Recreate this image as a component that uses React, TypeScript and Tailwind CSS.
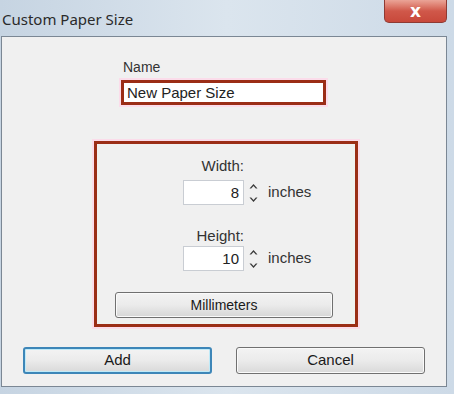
function Spin({ value }: { value: string }) {
  return (
    <div className="flex items-center">
      <div className="w-[61px] h-[25px] border border-[#c9cdd3] bg-white text-right pr-[4px] text-[15px] leading-[23px] text-[#222]">
        {value}
      </div>
      <div className="ml-[4px] w-[11px] h-[20px] flex flex-col items-center justify-between text-[#333]">
        <svg width="9" height="6" viewBox="0 0 9 6">
          <path d="M0.5 5.5 L4.5 1 L8.5 5.5 L6.8 5.5 L4.5 3 L2.2 5.5 Z" fill="#3a3a3a" />
        </svg>
        <svg width="9" height="6" viewBox="0 0 9 6">
          <path d="M0.5 0.5 L4.5 5 L8.5 0.5 L6.8 0.5 L4.5 3 L2.2 0.5 Z" fill="#3a3a3a" />
        </svg>
      </div>
      <span className="ml-[9px] text-[15px] text-[#333]">inches</span>
    </div>
  );
}

function Btn({ label, focused }: { label: string; focused?: boolean }) {
  return (
    <div
      className={
        "w-[189px] h-[27px] rounded-[3px] flex items-center justify-center text-[15px] text-[#1a1a1a] bg-gradient-to-b from-[#f3f3f3] via-[#ebebeb] to-[#d9d9d9] " +
        (focused
          ? "border-2 border-[#3d86b8] shadow-[inset_0_0_0_1px_#bfeaf8]"
          : "border border-[#707070] shadow-[inset_0_0_0_1px_#fafafa]")
      }
    >
      {label}
    </div>
  );
}

export default function App() {
  return (
    <div
      className="w-[454px] h-[394px] overflow-hidden bg-gradient-to-r from-[#c6d4e2] via-[#dbe5ee] to-[#cddae7] flex flex-col"
      style={{ fontFamily: '"Liberation Sans", Arial, sans-serif' }}
    >
      {/* title bar */}
      <div className="h-[36px] shrink-0 flex items-start">
        <div
          className="ml-[2px] mt-[8px] text-[15px] leading-[22px] text-[#2a2a2a]"
          style={{ fontFamily: '"Noto Sans", "Open Sans", sans-serif' }}
        >
          Custom Paper Size
        </div>
        <div className="ml-auto mr-[7px] w-[63px] h-[23px] rounded-b-[5px] border border-t-0 border-[#8e3a33] bg-gradient-to-b from-[#eaa497] via-[#d0584a] to-[#c8483a] flex items-center justify-center">
          <span className="text-white font-bold text-[17px] leading-none" style={{ fontFamily: '"DejaVu Sans", sans-serif' }}>
            x
          </span>
        </div>
      </div>

      {/* client */}
      <div className="ml-[1px] mr-[7px] h-[351px] border border-[#7b8794] bg-[#f0f0f0] flex flex-col text-[#222]">
        <div className="ml-[121px] mt-[22px] text-[14px] leading-[16px] text-[#333]">Name</div>
        <div className="ml-[119px] mt-[5px] w-[205px] h-[25px] border-[3px] border-[#9b2d16] bg-white shadow-[0_0_0_2px_#fbdcea] pl-[3px] text-[15px] leading-[19px] text-[#222]">
          New Paper Size
        </div>

        <div className="ml-[92px] mt-[36px] w-[264px] h-[186px] border-[3px] border-[#9b2d16] shadow-[0_0_0_2px_#fbdcea] flex flex-col">
          <div className="ml-[86px] mt-[13px] w-[61px] text-right text-[15px] leading-[17px] text-[#333]">Width:</div>
          <div className="ml-[86px] mt-[6px]">
            <Spin value="8" />
          </div>
          <div className="ml-[86px] mt-[22px] w-[61px] text-right text-[15px] leading-[17px] text-[#333]">Height:</div>
          <div className="ml-[86px] mt-[2px]">
            <Spin value="10" />
          </div>
          <div className="ml-[18px] mt-[21px] w-[218px] h-[26px] rounded-[3px] border border-[#707070] bg-gradient-to-b from-[#f3f3f3] via-[#ebebeb] to-[#d6d6d6] shadow-[inset_0_0_0_1px_#fafafa] flex items-center justify-center text-[14px] text-[#1a1a1a]">
            Millimeters
          </div>
        </div>

        <div className="ml-[21px] mt-[20px] flex gap-[24px]">
          <Btn label="Add" focused />
          <Btn label="Cancel" />
        </div>
      </div>
    </div>
  );
}
